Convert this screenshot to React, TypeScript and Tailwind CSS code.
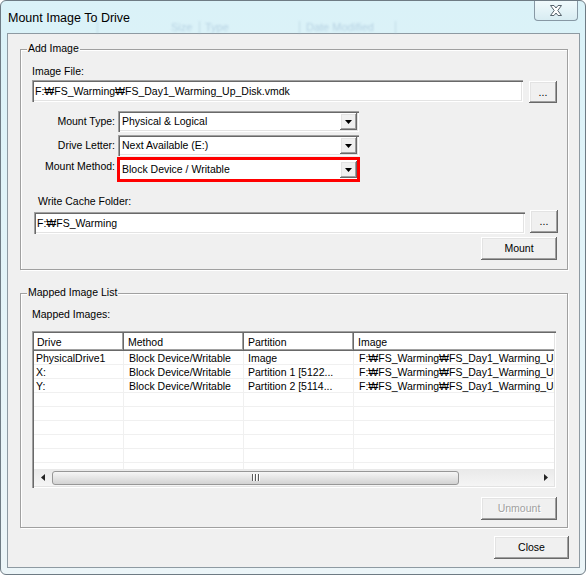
import React from "react"

// classic 3D edges
const sunken =
  "bg-white shadow-[inset_1px_1px_0_#a0a0a0,inset_2px_2px_0_#696969,inset_-1px_-1px_0_#ffffff,inset_-2px_-2px_0_#e3e3e3]"
const raised =
  "bg-[#f0f0f0] shadow-[inset_-1px_-1px_0_#696969,inset_1px_1px_0_#ffffff,inset_-2px_-2px_0_#a0a0a0,inset_2px_2px_0_#e3e3e3]"

const imagePath = "F:₩FS_Warming₩FS_Day1_Warming_Up_Disk.vmdk"

function Group({ title, className, children }: { title: string; className: string; children: React.ReactNode }) {
  return (
    <div className={`relative border border-[#a0a0a0] shadow-[1px_1px_0_#ffffff,inset_1px_1px_0_#ffffff] ${className}`}>
      <span className="absolute -top-[8px] left-[6px] bg-[#f0f0f0] px-[1px]">{title}</span>
      {children}
    </div>
  )
}

function Button({ className, children, disabled }: { className: string; children: React.ReactNode; disabled?: boolean }) {
  return (
    <div
      className={`${raised} flex items-center justify-center ${className} ${
        disabled ? "text-[#a0a0a0] [text-shadow:1px_1px_0_#ffffff]" : "text-black"
      }`}
    >
      {children}
    </div>
  )
}

function DropButton() {
  return (
    <div className={`${raised} w-[17px] h-[17px] shrink-0 flex items-center justify-center`}>
      <svg width="7" height="4" viewBox="0 0 7 4">
        <polygon points="0,0 7,0 3.5,4" fill="#000" />
      </svg>
    </div>
  )
}

function Select({ text }: { text: string }) {
  return (
    <div className={`${sunken} ml-[3px] w-[241px] h-[21px] flex items-center pl-[4px] pr-[2px]`}>
      <span className="flex-1 whitespace-nowrap">{text}</span>
      <DropButton />
    </div>
  )
}

const cols = [
  { w: "w-[90px]", head: "pl-[3px]", cell: "pl-[2px]" },
  { w: "w-[120px]", head: "pl-[4px]", cell: "pl-[5px]" },
  { w: "w-[110px]", head: "pl-[4px]", cell: "pl-[4px]" },
  { w: "w-[260px]", head: "pl-[4px]", cell: "pl-[5px]" },
]

const rows = [
  ["PhysicalDrive1", "Block Device/Writable", "Image", imagePath],
  ["X:", "Block Device/Writable", "Partition 1 [5122...", imagePath],
  ["Y:", "Block Device/Writable", "Partition 2 [5114...", imagePath],
  ["", "", "", ""],
  ["", "", "", ""],
  ["", "", "", ""],
  ["", "", "", ""],
  ["", "", "", ""],
  ["", "", "", ""],
]

function ListView() {
  return (
    <div className={`${sunken} mt-[10px] w-[524px] h-[157px] p-[2px] flex flex-col`}>
      <div className="flex h-[18px] shrink-0 overflow-hidden">
        {["Drive", "Method", "Partition", "Image"].map((h, i) => (
          <div
            key={h}
            className={`${cols[i].w} ${cols[i].head} shrink-0 h-full flex items-center bg-white shadow-[inset_-1px_-1px_0_#696969,inset_-2px_-2px_0_#a0a0a0]`}
          >
            {h}
          </div>
        ))}
      </div>
      <div className="flex-1 overflow-hidden bg-white">
        {rows.map((r, ri) => (
          <div key={ri} className="flex h-[14px] border-b border-[#f0f0f0]">
            {r.map((c, ci) => (
              <div
                key={ci}
                className={`${cols[ci].w} ${cols[ci].cell} shrink-0 h-full leading-[14px] whitespace-nowrap overflow-hidden ${
                  ci < 3 ? "border-r border-[#f0f0f0]" : ""
                }`}
              >
                {c}
              </div>
            ))}
          </div>
        ))}
      </div>
      <div className="flex h-[17px] shrink-0 bg-linear-to-b from-[#e9e9e9] to-[#f5f5f5] items-center">
        <div className="w-[18px] h-full flex items-center justify-center">
          <svg width="4" height="7" viewBox="0 0 4 7">
            <polygon points="4,0 4,7 0,3.5" fill="#222" />
          </svg>
        </div>
        <div className="w-[407px] h-[14px] rounded-[3px] border border-[#979797] bg-linear-to-b from-[#f6f6f6] to-[#d3d3d3] flex items-center justify-center">
          <div className="flex gap-[1px] h-[7px]">
            <div className="w-[1px] bg-[#5a5a5a] shadow-[1px_0_0_#ffffff]" />
            <div className="w-[1px] ml-[1px] bg-[#5a5a5a] shadow-[1px_0_0_#ffffff]" />
            <div className="w-[1px] ml-[1px] bg-[#5a5a5a] shadow-[1px_0_0_#ffffff]" />
          </div>
        </div>
        <div className="flex-1" />
        <div className="w-[17px] h-full flex items-center justify-center">
          <svg width="4" height="7" viewBox="0 0 4 7">
            <polygon points="0,0 4,3.5 0,7" fill="#222" />
          </svg>
        </div>
      </div>
    </div>
  )
}

export default function App() {
  return (
    <div className="w-[587px] h-[576px] bg-white font-['Liberation_Sans',Tahoma,sans-serif] text-[10.5px] leading-[13px] text-black">
      <div className="w-[586px] h-[575px] rounded-[6px] border border-[#6e7b84] bg-linear-to-b from-[#daf2f8] to-[#ecf5f8] flex flex-col">
        {/* title bar */}
        <div className="relative h-[32px] shrink-0 flex">
          <div className="absolute left-[96px] top-[20px] h-[13px] w-[300px] blur-[0.8px] opacity-50 text-[#8fb0cc] text-[11px]">
            <span className="absolute left-0 top-0 h-[13px] w-[1px] bg-[#a9c3d6]" />
            <span className="absolute left-[74px] top-0">Size</span>
            <span className="absolute left-[102px] top-0 h-[13px] w-[1px] bg-[#a9c3d6]" />
            <span className="absolute left-[108px] top-0">Type</span>
            <span className="absolute left-[202px] top-0 h-[13px] w-[1px] bg-[#a9c3d6]" />
            <span className="absolute left-[209px] top-0">Date Modified</span>
            <span className="absolute left-[298px] top-0 h-[13px] w-[1px] bg-[#a9c3d6]" />
          </div>
          <div className="relative pl-[7px] pt-[10px] text-[12.5px] leading-[15px]">Mount Image To Drive</div>
          <div className="relative ml-auto mr-[7px] w-[44px] h-[20px] rounded-b-[4px] border border-t-0 border-[#8798a4] bg-linear-to-b from-[#f0fafc] to-[#d8ecf2] flex items-center justify-center">
            <svg width="14" height="11" viewBox="0 0 14 11">
              <path
                d="M1.5 0.5 L5 0.5 L7 3 L9 0.5 L12.5 0.5 L8.8 5.5 L12.5 10.5 L9 10.5 L7 8 L5 10.5 L1.5 10.5 L5.2 5.5 Z"
                fill="#ffffff"
                stroke="#56636c"
                strokeWidth="1"
              />
            </svg>
          </div>
        </div>

        {/* client area */}
        <div className="ml-[6px] w-[573px] h-[535px] border border-[#8e9aa2] bg-[#f0f0f0] flex flex-col">
          <Group title="Add Image" className="ml-[12px] mt-[15px] w-[548px] h-[221px] pl-[11px] pt-[15px]">
            <div>Image File:</div>
            <div className="flex items-start mt-[2px]">
              <div className={`${sunken} w-[491px] h-[22px] flex items-center pl-[3px] whitespace-nowrap overflow-hidden`}>
                {imagePath}
              </div>
              <Button className="ml-[6px] mt-[1px] w-[28px] h-[22px]">...</Button>
            </div>

            <div className="flex items-center mt-[8px]">
              <div className="w-[83px] text-right">Mount Type:</div>
              <Select text="Physical & Logical" />
            </div>
            <div className="flex items-center mt-[3px]">
              <div className="w-[83px] text-right">Drive Letter:</div>
              <Select text="Next Available (E:)" />
            </div>
            <div className="flex items-start mt-[1px]">
              <div className="w-[83px] text-right mt-[3px]">Mount Method:</div>
              <div className="ml-[2px] w-[243px] h-[25px] border-[3px] border-[#ff0000] bg-white flex items-center pl-[2px]">
                <span className="flex-1 whitespace-nowrap">Block Device / Writable</span>
                <DropButton />
              </div>
            </div>

            <div className="mt-[13px] ml-[6px]">Write Cache Folder:</div>
            <div className="flex items-start mt-[2px]">
              <div className={`${sunken} ml-[2px] mt-[2px] w-[491px] h-[22px] flex items-center pl-[3px] whitespace-nowrap`}>
                F:₩FS_Warming
              </div>
              <Button className="ml-[5px] w-[28px] h-[23px]">...</Button>
            </div>
            <div className="w-[525px] flex justify-end mt-[3px]">
              <Button className="w-[76px] h-[23px]">Mount</Button>
            </div>
          </Group>

          <Group title="Mapped Image List" className="ml-[12px] mt-[23px] w-[548px] h-[235px] pl-[11px] pt-[14px]">
            <div>Mapped Images:</div>
            <ListView />
            <div className="w-[525px] flex justify-end mt-[9px]">
              <Button className="w-[76px] h-[23px]" disabled>
                Unmount
              </Button>
            </div>
          </Group>

          <div className="flex justify-end pr-[10px] mt-[8px]">
            <Button className="w-[75px] h-[23px]">Close</Button>
          </div>
        </div>
      </div>
    </div>
  )
}
